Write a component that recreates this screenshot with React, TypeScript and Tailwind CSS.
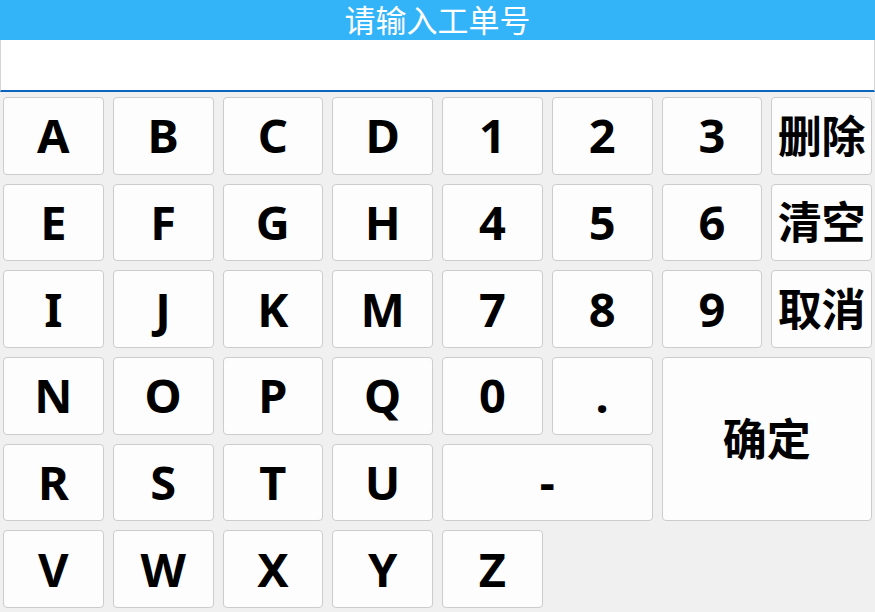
import React from "react";

type Key = { label: string; cls?: string; cjk?: boolean };

const keys: Key[] = [
  { label: "A" }, { label: "B" }, { label: "C" }, { label: "D" },
  { label: "1" }, { label: "2" }, { label: "3" }, { label: "删除", cjk: true },
  { label: "E" }, { label: "F" }, { label: "G" }, { label: "H" },
  { label: "4" }, { label: "5" }, { label: "6" }, { label: "清空", cjk: true },
  { label: "I" }, { label: "J" }, { label: "K" }, { label: "M" },
  { label: "7" }, { label: "8" }, { label: "9" }, { label: "取消", cjk: true },
  { label: "N" }, { label: "O" }, { label: "P" }, { label: "Q" },
  { label: "0" }, { label: "." },
  { label: "确定", cjk: true, cls: "col-span-2 row-span-2" },
  { label: "R" }, { label: "S" }, { label: "T" }, { label: "U" },
  { label: "-", cls: "col-span-2" },
  { label: "V" }, { label: "W" }, { label: "X" }, { label: "Y" }, { label: "Z" },
];

export default function App() {
  return (
    <div
      className="flex h-[612px] w-[875px] flex-col overflow-hidden bg-[#f0f0f0]"
      style={{ fontFamily: '"Noto Sans", "Noto Sans CJK SC", sans-serif' }}
    >
      <div className="h-[40px] bg-[#33b4f8] text-center text-[31px] leading-[40px] text-white">
        请输入工单号
      </div>
      <div className="h-[52px] border-x border-b-2 border-x-[#d4d4d4] border-b-[#0b64bd] bg-white" />
      <div className="grid flex-1 grid-cols-8 grid-rows-6 gap-[9px] px-[3px] pb-[4px] pt-[5px]">
        {keys.map((k) => (
          <button
            key={k.label}
            className={`flex items-center justify-center rounded-[4px] border border-[#cccccc] bg-[#fdfdfd] font-bold leading-none text-black ${
              k.cjk ? "text-[44px]" : "text-[47px]"
            } ${k.cls ?? ""}`}
          >
            {k.label}
          </button>
        ))}
      </div>
    </div>
  );
}
